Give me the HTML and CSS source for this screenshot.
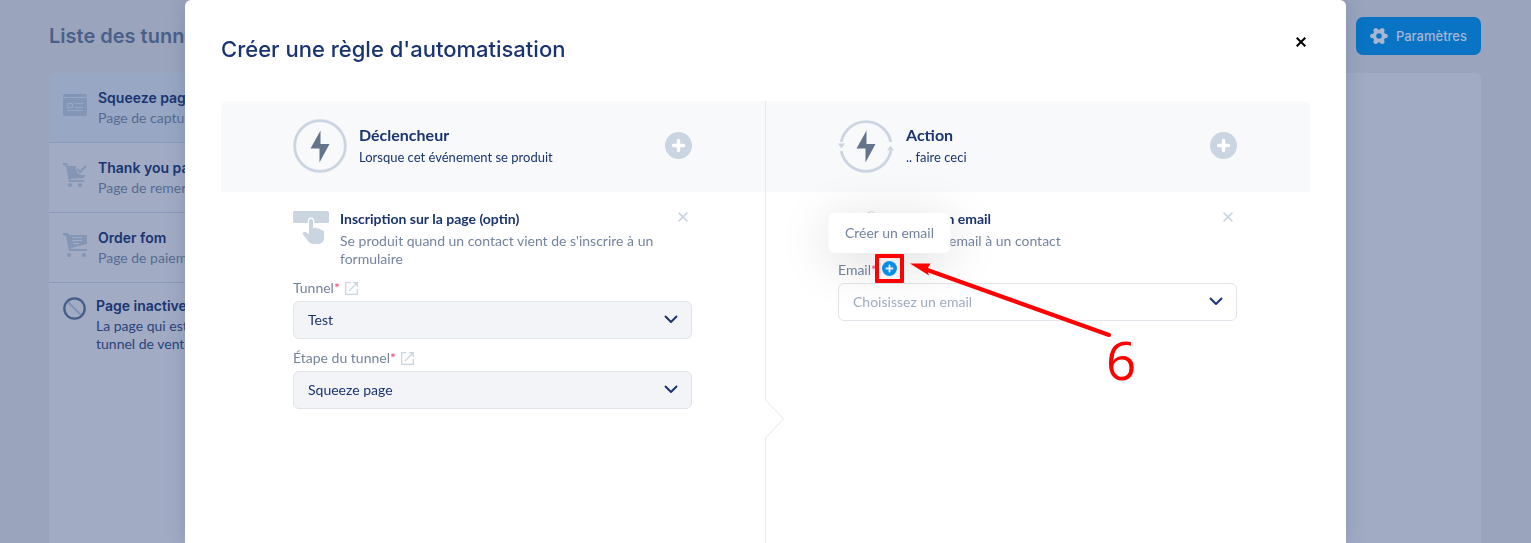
FILE: index.html
```html
<!DOCTYPE html>
<html lang="fr">
  <head>
    <meta charset="UTF-8" />
    <meta name="viewport" content="width=device-width, initial-scale=1.0" />
    <title>Créer une règle d'automatisation</title>
    <link rel="stylesheet" href="styles.css">
  </head>
  <body>
    <div class="page">
      <div class="page-header">
        <h1>Liste des tunnels</h1>
        <button class="settings">
          <svg width="18" height="18" viewBox="0 0 18 18">
            <g fill="none" stroke="#a9b6d2">
              <circle cx="9" cy="9" r="4.600" stroke-width="3.600"/>
              <path stroke-width="4.600" stroke-linecap="round" d="M2.400 9h.4M15.200 9h.4M5.700 3.300l.2.300M12.300 3.300l-.2.300M5.700 14.700l.2-.3M12.300 14.700l-.2-.3"/>
            </g>
          </svg>
          Paramètres
        </button>
      </div>
      <div class="panel">
        <div class="steps">
          <div class="step active">
            <svg width="24" height="24" viewBox="0 0 24 24">
              <path fill="#8496b6" d="M2 1h20a2 2 0 0 1 2 2v1H0V3a2 2 0 0 1 2-2zM0 5h24v16a2 2 0 0 1-2 2H2a2 2 0 0 1-2-2z"/>
              <path fill="none" stroke="#98a7c3" d="M4.500 10.500h5v4h-5zM12 10.500h8M12 14.500h8M4 17.500h16"/>
            </svg>
            <div>
              <h3>Squeeze page</h3>
              <p>Page de capture</p>
            </div>
          </div>
          <div class="step">
            <svg width="24" height="24" viewBox="0 0 24 24">
              <path fill="#8496b6" d="M0 0h4l1 3h8c-1 6 3 10 9 9l-1 3-14 1v1h14v2H6L3 3 0 2z"/>
              <path fill="none" stroke="#8496b6" stroke-width="2" d="M14 6l3 3 6-6"/>
              <circle cx="7" cy="22" r="2" fill="#8496b6"/>
              <circle cx="17" cy="22" r="2" fill="#8496b6"/>
            </svg>
            <div>
              <h3>Thank you page</h3>
              <p>Page de remerciement</p>
            </div>
          </div>
          <div class="step">
            <svg width="24" height="24" viewBox="0 0 24 24">
              <path fill="#8496b6" d="M0 0h5l1 2h18v9L8 15v1h16v2H6L3 3 0 2z"/>
              <path fill="none" stroke="#a1abc4" d="M9 4.500h10M9 7.500h10M10 10.500h6"/>
              <circle cx="6" cy="22" r="2" fill="#8496b6"/>
              <circle cx="21" cy="22" r="2" fill="#8496b6"/>
            </svg>
            <div>
              <h3>Order fom</h3>
              <p>Page de paiement</p>
            </div>
          </div>
          <div class="step inactive">
            <svg width="23" height="23" viewBox="0 0 23 23">
              <path stroke="#8092b3" stroke-width="2" d="M5 5l13 13"/>
              <circle cx="11.500" cy="11.500" r="10.200" fill="none" stroke="#465d87" stroke-width="2.300"/>
            </svg>
            <div>
              <h3>Page inactive</h3>
              <p>La page qui est<br>tunnel de vente</p>
            </div>
          </div>
        </div>
      </div>
    </div>

    <div class="overlay">
      <div class="modal">
        <div class="modal-header">
          <h2>Créer une règle d'automatisation</h2>
          <button class="close" aria-label="Fermer">
            <svg width="10" height="10" viewBox="0 0 10 10">
              <path stroke="#000" stroke-width="2" d="M.7.7l8.600 8.600M9.300.7L.7 9.300"/>
            </svg>
          </button>
        </div>

        <div class="columns">
          <section class="column">
            <div class="column-header">
              <svg width="54" height="54" viewBox="0 0 54 54">
                <circle cx="27" cy="27" r="25.300" fill="none" stroke="#cbd5e2" stroke-width="2.800"/>
                <path fill="#64748b" d="M27.500 11.500 17.500 29.500h9v14L36.500 25h-9z"/>
              </svg>
              <div class="heading">
                <h3>Déclencheur</h3>
                <p>Lorsque cet événement se produit</p>
              </div>
              <button class="add" aria-label="Ajouter un déclencheur">
                <svg width="27" height="27" viewBox="0 0 27 27">
                  <circle cx="13.500" cy="13.500" r="13.500" fill="#cbd5e2"/>
                  <path stroke="#fff" stroke-width="3.400" stroke-linecap="round" d="M13.500 8.500v10M8.500 13.500h10"/>
                </svg>
              </button>
            </div>
            <div class="column-body">
              <div class="rule">
                <svg width="36" height="36" viewBox="0 0 36 36">
                  <rect y="1" width="36" height="12" rx="1.500" fill="#cbd5e2"/>
                  <path fill="#cbd5e2" stroke="#fff" stroke-width="2.500" paint-order="stroke" d="M16 11c0-3 4-3 4 0V18l2 .2c1.500-.8 2.500 0 3 .8 1.500-.6 2.500 0 2.800 1 2-.4 3.200.5 3.200 2.500V28c0 4-3 6-6 6h-5c-2 0-3.500-1-5-3l-5-6.500c-1-2 1-3.500 2.500-2.500l3.500 2.500z"/>
                </svg>
                <div class="rule-text">
                  <h4>Inscription sur la page (optin)</h4>
                  <p>Se produit quand un contact vient de s'inscrire à un formulaire</p>
                </div>
                <button class="remove" aria-label="Supprimer">
                  <svg width="10" height="10" viewBox="0 0 10 10">
                    <path stroke="#cbd5e2" stroke-width="1.600" d="M.6.6l8.800 8.800M9.400.6L.6 9.400"/>
                  </svg>
                </button>
              </div>
              <div class="field">
                <div class="label-row">
                  <label for="tunnel">Tunnel<span class="required">*</span></label>
                  <a href="#" aria-label="Ouvrir le tunnel">
                    <svg width="13" height="13" viewBox="0 0 13 13">
                      <path fill="none" stroke="#cbd5e2" stroke-width="1.300" d="M5.500.7H.7v11.600h11.600V7M8 .7h4.300V5M4 9l8-8"/>
                    </svg>
                  </a>
                </div>
                <div class="select">
                  <select id="tunnel"><option>Test</option></select>
                  <svg width="14" height="8" viewBox="0 0 14 8">
                    <path fill="none" stroke="#1a3470" stroke-width="2" d="M1 1l6 6 6-6"/>
                  </svg>
                </div>
              </div>
              <div class="field">
                <div class="label-row">
                  <label for="step">Étape du tunnel<span class="required">*</span></label>
                  <a href="#" aria-label="Ouvrir l'étape">
                    <svg width="13" height="13" viewBox="0 0 13 13">
                      <path fill="none" stroke="#cbd5e2" stroke-width="1.300" d="M5.500.7H.7v11.600h11.600V7M8 .7h4.300V5M4 9l8-8"/>
                    </svg>
                  </a>
                </div>
                <div class="select">
                  <select id="step"><option>Squeeze page</option></select>
                  <svg width="14" height="8" viewBox="0 0 14 8">
                    <path fill="none" stroke="#1a3470" stroke-width="2" d="M1 1l6 6 6-6"/>
                  </svg>
                </div>
              </div>
            </div>
          </section>

          <div class="divider">
            <svg class="notch" width="20" height="38" viewBox="0 0 20 38">
              <rect width="1" height="38" fill="#fff"/>
              <path fill="#fff" stroke="#e6e9ee" d="M.5 0 L18.500 19 .5 38"/>
            </svg>
          </div>

          <section class="column">
            <div class="column-header">
              <svg width="56" height="54" viewBox="0 0 56 54">
                <path fill="none" stroke="#cbd5e2" stroke-width="2.800" d="M3.200 23a25.300 25.300 0 0 1 49.600 0M3.200 32a25.300 25.300 0 0 0 49.600 0"/>
                <path fill="#cbd5e2" d="M0 24.500h7L3.500 29.500zM49 31.500h7L52.500 26.500z"/>
                <path fill="#64748b" d="M28.500 11.500 18.500 29.500h9v14L37.500 25h-9z"/>
              </svg>
              <div class="heading">
                <h3>Action</h3>
                <p>.. faire ceci</p>
              </div>
              <button class="add" aria-label="Ajouter une action">
                <svg width="27" height="27" viewBox="0 0 27 27">
                  <circle cx="13.500" cy="13.500" r="13.500" fill="#cbd5e2"/>
                  <path stroke="#fff" stroke-width="3.400" stroke-linecap="round" d="M13.500 8.500v10M8.500 13.500h10"/>
                </svg>
              </button>
            </div>
            <div class="column-body">
              <div class="rule">
                <svg width="36" height="36" viewBox="0 0 36 36">
                  <path fill="#cbd5e2" d="M35 0 0 18l10 4zM36 1 12 23v11l7-7 9 4z"/>
                </svg>
                <div class="rule-text">
                  <h4>Envoyer un email</h4>
                  <p>Envoie un email à un contact</p>
                </div>
                <button class="remove" aria-label="Supprimer">
                  <svg width="10" height="10" viewBox="0 0 10 10">
                    <path stroke="#cbd5e2" stroke-width="1.600" d="M.6.6l8.800 8.800M9.400.6L.6 9.400"/>
                  </svg>
                </button>
              </div>
              <div class="field">
                <div class="label-row">
                  <label for="email">Email<span class="required">*</span></label>
                  <button class="create" aria-label="Créer un email">
                    <svg width="15" height="15" viewBox="0 0 15 15">
                      <circle cx="7.500" cy="7.500" r="7.500" fill="#0c97f2"/>
                      <path stroke="#fff" stroke-width="1.800" stroke-linecap="round" d="M7.500 4.500v6M4.500 7.500h6"/>
                    </svg>
                    <span class="tooltip">Créer un email</span>
                    <span class="highlight"></span>
                  </button>
                </div>
                <div class="select empty">
                  <select id="email"><option>Choisissez un email</option></select>
                  <svg width="14" height="8" viewBox="0 0 14 8">
                    <path fill="none" stroke="#1a3470" stroke-width="2" d="M1 1l6 6 6-6"/>
                  </svg>
                </div>
              </div>
            </div>
            <svg class="arrow" width="202" height="76" viewBox="0 0 202 76">
              <path stroke="#fe0000" stroke-width="4" stroke-linecap="round" d="M16 7.500 199 73"/>
              <path fill="#fe0000" d="M0 1.500 20.500 1.500 17 7.500 19 13.500z"/>
            </svg>
            <span class="number">6</span>
          </section>
        </div>
      </div>
    </div>
  </body>
</html>
```
FILE: styles.css
```css
* {
  margin: 0;
  padding: 0;
  box-sizing: border-box;
}
body {
  height: 100vh;
  overflow: hidden;
  background-color: #9aa5bd;
  color: #1a3470;
  font-family: Lato, "Liberation Sans", sans-serif;
  font-size: 14px;
  line-height: 18px;
}
svg {
  display: block;
  flex-shrink: 0;
}
button {
  border: none;
  background: none;
  font-family: inherit;
  cursor: pointer;
}

/* page behind the modal */
.page {
  height: 100vh;
  padding: 17px 50px 0 49px;
  display: flex;
  flex-direction: column;
}
.page-header {
  display: flex;
  justify-content: space-between;
  align-items: center;
  margin-bottom: 18px;
}
.page-header h1 {
  color: #4a6088;
  font-family: Inter, sans-serif;
  font-size: 20px;
  font-weight: 600;
  line-height: 24px;
}
.settings {
  height: 38px;
  padding: 0 14px;
  display: flex;
  align-items: center;
  gap: 8px;
  border-radius: 7px;
  background-color: #0973c4;
  color: #a9b6d2;
  font-family: Inter, sans-serif;
  font-size: 13px;
  font-weight: 500;
}
.panel {
  flex: 1;
  border-radius: 6px 6px 0 0;
  background-color: #a1abc4;
  overflow: hidden;
}
.steps {
  width: 28%;
}
.step {
  height: 70px;
  padding: 16px 14px 0;
  display: flex;
  align-items: flex-start;
  gap: 11px;
  border-bottom: 1px solid #8a9aba;
}
.step svg {
  margin-top: 4px;
}
.step.active {
  background-color: #98a7c3;
}
.step h3 {
  margin-bottom: 2px;
  font-family: Inter, sans-serif;
  font-size: 14px;
  font-weight: 600;
}
.step p {
  color: #566b90;
}
.step.inactive {
  height: auto;
  padding-top: 14px;
  gap: 10px;
  border-bottom: none;
}
.step.inactive svg {
  margin-top: 0;
}
.step.inactive p {
  color: #2a437a;
}

/* modal */
.overlay {
  position: fixed;
  inset: 0;
  padding: 0 185px;
}
.modal {
  height: 100%;
  padding: 0 36px;
  display: flex;
  flex-direction: column;
  border-radius: 6px 6px 0 0;
  background-color: #fff;
  box-shadow: 0 0 20px rgba(40, 60, 110, 0.2);
}
.modal-header {
  padding: 36px 4px 38px 0;
  display: flex;
  justify-content: space-between;
  align-items: flex-start;
}
.modal-header h2 {
  font-family: Inter, sans-serif;
  font-size: 22px;
  font-weight: 500;
  line-height: 27px;
}
.close {
  padding: 1px 0;
}
.columns {
  flex: 1;
  display: flex;
}
.column {
  flex: 1;
  position: relative;
}
.column-header {
  height: 91px;
  padding: 0 73px 2px 72px;
  display: flex;
  align-items: center;
  gap: 12px;
  background-color: #f8f9fb;
}
.column:first-child .column-header {
  border-top-left-radius: 6px;
}
.column:last-child .column-header {
  border-top-right-radius: 6px;
}
.heading {
  flex: 1;
}
.heading h3 {
  margin-bottom: 4px;
  font-size: 16px;
  font-weight: 700;
}
.heading p {
  font-size: 13px;
}
.divider {
  width: 1px;
  position: relative;
  background-color: #e6e9ee;
}
.notch {
  position: absolute;
  top: 299px;
  left: 0;
}
.column-body {
  padding: 18px 73px 18px 72px;
}
.rule {
  display: flex;
  align-items: flex-start;
  gap: 11px;
  margin-bottom: 11px;
}
.rule-text {
  flex: 1;
}
.rule h4 {
  margin-bottom: 4px;
  font-size: 14px;
  font-weight: 700;
}
.rule p {
  color: #74849f;
}
.remove {
  padding: 2px 4px;
}
.field {
  margin-bottom: 10px;
}
.label-row {
  display: flex;
  align-items: center;
  gap: 5px;
  margin-bottom: 4px;
  color: #74849f;
}
.required {
  color: #f8416c;
}
.select {
  display: grid;
  align-items: center;
}
.select select,
.select svg {
  grid-area: 1 / 1;
}
.select svg {
  justify-self: end;
  margin: 0 14px 2px 0;
  pointer-events: none;
}
select {
  width: 100%;
  height: 38px;
  padding: 0 14px 2px;
  appearance: none;
  border: 1px solid #e1e4e8;
  border-radius: 6px;
  background-color: #f3f4f7;
  color: #1a3470;
  font-family: inherit;
  font-size: 14px;
}
.empty select {
  background-color: #fff;
  color: #a0acc0;
}

/* create button with its tooltip */
.create {
  position: relative;
  align-self: flex-start;
}
.tooltip {
  position: absolute;
  bottom: 23px;
  left: 50%;
  transform: translateX(-50%);
  z-index: 1;
  padding: 11px 16px;
  border-radius: 6px;
  background-color: #fff;
  box-shadow: 0 8px 50px rgba(0, 0, 0, 0.15);
  color: #74849f;
  font-size: 14px;
  line-height: 18px;
  white-space: nowrap;
}
.highlight {
  position: absolute;
  inset: -7px;
  z-index: 2;
  border: 4px solid #fe0000;
  border-radius: 1px;
}
.arrow {
  position: absolute;
  top: 161px;
  left: 144px;
  z-index: 2;
}
.number {
  position: absolute;
  top: 229px;
  left: 340px;
  color: #fe0000;
  font-family: "Open Sans", sans-serif;
  font-size: 53px;
  line-height: 60px;
}
```
